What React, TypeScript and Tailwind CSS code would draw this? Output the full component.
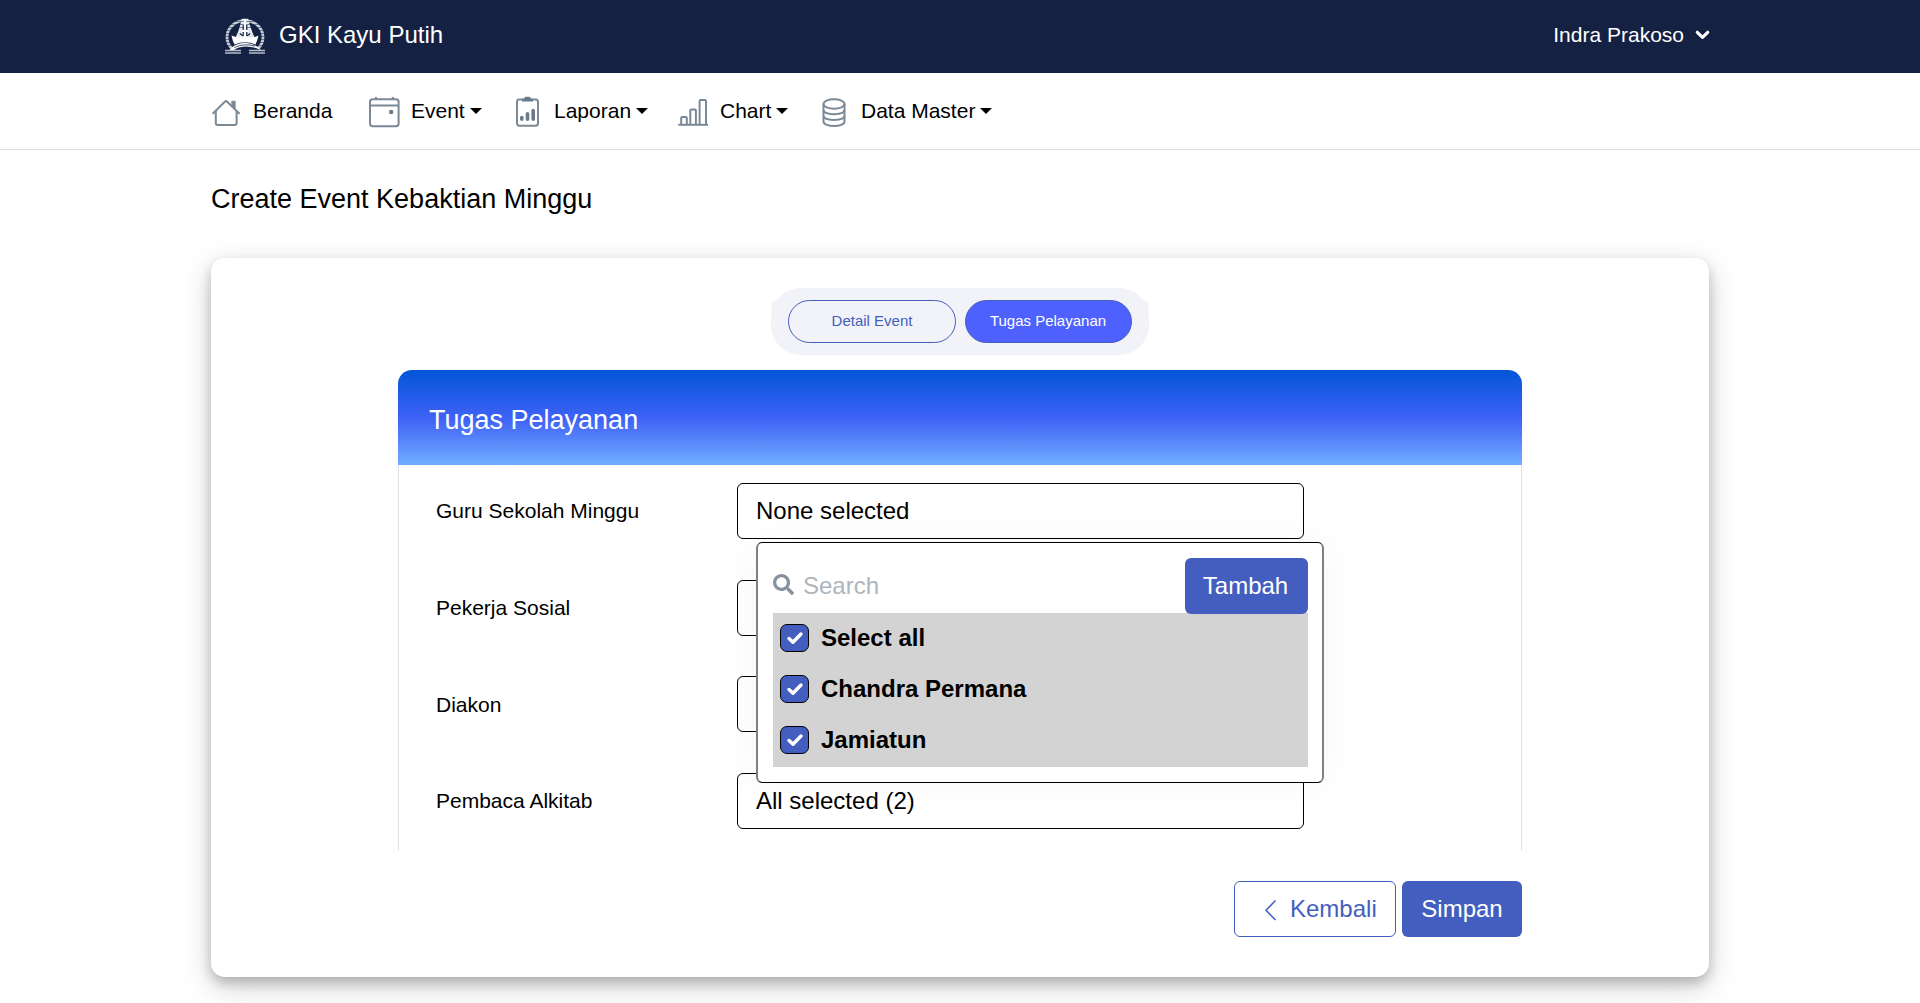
import React from "react";
import { FaSearch } from "react-icons/fa";

const Caret = () => (
  <span className="ml-[5px] mt-[-1px] h-0 w-0 border-x-[6px] border-t-[6px] border-x-transparent border-t-black" />
);

const stroke = { fill: "none", stroke: "#7b8896", strokeWidth: 2 } as const;

const HomeIcon = () => (
  <svg className="h-[30px] w-[30px] shrink-0" viewBox="0 0 30 30" {...stroke} strokeLinecap="round" strokeLinejoin="round">
    <path d="M2.2 16.3 L13.8 4.7 Q15 3.6 16.2 4.7 L28 16.3" />
    <path d="M4.8 14.5 V26 Q4.8 28 6.8 28 H23.6 Q25.6 28 25.6 26 V14.5" />
    <path d="M21 4.2 H24.2 V11.5 L21 8.5 Z" fill="#7b8896" strokeWidth="0.8" />
  </svg>
);

const CalendarIcon = () => (
  <svg className="h-[32px] w-[32px] shrink-0" viewBox="0 0 32 32" {...stroke}>
    <rect x="2" y="3.2" width="28.6" height="27" rx="2.6" />
    <path d="M2 9.6 H30.6 M8 1 V3.5 M24.8 1 V3.5" />
    <circle cx="23.2" cy="16" r="2.2" fill="#6b7a8b" stroke="none" />
  </svg>
);

const ReportIcon = () => (
  <svg className="h-[31px] w-[25px] shrink-0" viewBox="0 0 25 31" {...stroke}>
    <rect x="2" y="3.5" width="21" height="26.2" rx="2.4" />
    <path d="M7 5.5 V2.8 H9.3 Q9.3 0.8 10.8 0.8 H14.2 Q15.7 0.8 15.7 2.8 H18 V5.5 Z" fill="#6b7a8b" stroke="none" />
    <path d="M6.8 21.5 V23.3 M12.5 17.8 V23.3 M18.2 14.5 V23.3" strokeWidth="3.6" strokeLinecap="round" stroke="#6b7a8b" />
  </svg>
);

const ChartIcon = () => (
  <svg className="h-[30px] w-[32px] shrink-0" viewBox="0 0 32 30" {...stroke}>
    <path d="M1.3 27.8 H31" />
    <path d="M4.2 27 V21 Q4.2 20 5.2 20 H8.8 Q9.8 20 9.8 21 V27" />
    <path d="M13.3 27 V13.5 Q13.3 12.5 14.3 12.5 H17.9 Q18.9 12.5 18.9 13.5 V27" />
    <path d="M22.6 27 V4 Q22.6 3 23.6 3 H28 Q29 3 29 4 V27" />
  </svg>
);

const DatabaseIcon = () => (
  <svg className="h-[30px] w-[25px] shrink-0" viewBox="0 0 25 30" {...stroke}>
    <ellipse cx="12" cy="7" rx="10.5" ry="4.7" />
    <path d="M1.5 7 V24.5 C1.5 30.5 22.5 30.5 22.5 24.5 V7" />
    <path d="M1.5 13 C1.5 18.5 22.5 18.5 22.5 13 M1.5 18.8 C1.5 24.3 22.5 24.3 22.5 18.8" />
  </svg>
);

const Logo = () => (
  <svg className="h-[40px] w-[40px]" viewBox="0 0 40 40" fill="none">
    <path d="M7 33.5 A18 16.5 0 1 1 33 33.5" stroke="#c6ccd7" strokeWidth="2.8" />
    <path d="M17 3.5 H23 L24.5 9 Q27 17 30 23.500 H10 Q13.500 17 15.500 9 Z" fill="#e6e9ee" />
    <g stroke="#142143" strokeWidth="1" opacity="0.5">
      <path d="M0 3.5 H40 M0 6.5 H40 M0 9.5 H40 M0 12.5 H40 M0 15.5 H12 M28 15.5 H40 M0 18.5 H11 M29 18.5 H40 M0 21.5 H6 M34 21.5 H40 M0 24.5 H7 M33 24.5 H40 M0 27.5 H7 M33 27.5 H40 M0 30.5 H7 M33 30.5 H40" />
    </g>
    <path d="M18.2 10 V15 M21.8 10 V15 M18.2 17 V21 M21.8 17 V21" stroke="#142143" strokeWidth="1.2" />
    <path d="M14.8 18.5 L17.8 20.8 M25.2 18.5 L22.2 20.8" stroke="#142143" strokeWidth="1.2" />
    <path d="M20 4 V24 M17 16 H23" stroke="#fff" strokeWidth="2" />
    <path d="M6.5 20.5 Q12 23.5 20 22.3 Q28 23.5 33.5 20.5 Q32.5 25.5 30.5 29.5 Q20 25 9.5 29.5 Q7.5 26 6.5 20.5 Z" fill="#fff" />
    <path d="M4 35.5 Q9 28.5 20 27.8 Q31 28.5 36.5 35.5 Q29 31.2 20 31.5 Q12 32 8.5 35.5 Z" fill="#fff" />
    <path d="M9.5 32.5 Q19 27.8 30 31.2" stroke="#142143" strokeWidth="0.8" />
    <path d="M0 35.5 H16 M24 35.5 H40 M0 38 H16 M24 38 H40" stroke="#b4bbc9" strokeWidth="1.700" />
  </svg>
);

const navItems = [
  { label: "Beranda", Icon: HomeIcon, box: "w-[157px]", slot: "w-[42px] pt-px", caret: false },
  { label: "Event", Icon: CalendarIcon, box: "w-[147px]", slot: "w-[43px] pt-px", caret: true },
  { label: "Laporan", Icon: ReportIcon, box: "w-[162px]", slot: "w-[39px] pt-px", caret: true },
  { label: "Chart", Icon: ChartIcon, box: "w-[145px]", slot: "w-[43px] pt-px", caret: true },
  { label: "Data Master", Icon: DatabaseIcon, box: "w-[180px]", slot: "w-[39px] pt-px", caret: true },
];

const rows = [
  { label: "Guru Sekolah Minggu", value: "None selected" },
  { label: "Pekerja Sosial", value: "" },
  { label: "Diakon", value: "" },
  { label: "Pembaca Alkitab", value: "All selected (2)" },
];

const options = ["Select all", "Chandra Permana", "Jamiatun"];

const Dropdown = () => (
  <div className="absolute left-[18px] top-[58px] z-10 h-[241px] w-[568px] rounded-[6px] border-x-2 border-y border-x-[#808080] border-y-black bg-white pl-[15px] pr-[14px] pt-[15px] shadow-[0_0_40px_rgba(0,0,0,0.04)]">
    <div className="flex h-[55px] items-start">
      <FaSearch className="mt-[16px] h-[21px] w-[21px] text-[#8593a1]" />
      <span className="ml-[9px] mt-[10px] grow text-[24px] leading-[36px] text-[#adb5bd]">Search</span>
      <button className="relative h-[56px] w-[123px] shrink-0 rounded-[6px] bg-[#435ebe] pr-[2px] text-[24px] leading-[36px] text-white">Tambah</button>
    </div>
    <div className="flex h-[154px] flex-col bg-[#d3d3d3] pl-[7px]">
      {options.map((o) => (
        <div key={o} className="flex h-[51px] items-center">
          <span className="mt-[-1px] flex h-[28px] w-[29px] items-center justify-center rounded-[7px] border border-black bg-[#435ebe]">
            <svg className="h-[14px] w-[18px]" viewBox="0 0 18 14" fill="none" stroke="#fff" strokeWidth="3.4" strokeLinecap="round" strokeLinejoin="round">
              <path d="M3 7.5 L7 11.3 L15 3" />
            </svg>
          </span>
          <span className="ml-[12px] mt-[-2px] text-[24px] font-bold leading-[36px]">{o}</span>
        </div>
      ))}
    </div>
  </div>
);

export default function App() {
  return (
    <div className="flex h-[1003px] w-[1920px] flex-col overflow-hidden bg-white font-['Liberation_Sans',Arial,sans-serif] text-black">
      <header className="flex h-[73px] shrink-0 items-start justify-between bg-[#142143] pl-[225px] pr-[210px] text-white">
        <div className="flex items-start">
          <div className="pt-[15px]"><Logo /></div>
          <span className="ml-[14px] mt-[17px] text-[24px] leading-[36px]">GKI Kayu Putih</span>
        </div>
        <div className="mt-[19px] flex items-center text-[21px] leading-[32px]">
          Indra Prakoso
          <svg className="ml-[11px] mt-[-1px] h-[10px] w-[15px]" viewBox="0 0 15 10" fill="none" stroke="#fff" strokeWidth="3.2" strokeLinecap="round" strokeLinejoin="round">
            <path d="M2.3 2.3 L7.5 7.3 L12.7 2.3" />
          </svg>
        </div>
      </header>

      <nav className="flex h-[77px] shrink-0 items-center border-b border-[#dcdcdc] pl-[211px]">
        {navItems.map(({ label, Icon, box, slot, caret }) => (
          <div key={label} className={`flex items-center ${box}`}>
            <span className={`shrink-0 ${slot}`}><Icon /></span>
            <span className="whitespace-nowrap text-[21px] leading-[32px]">{label}</span>
            {caret && <Caret />}
          </div>
        ))}
      </nav>

      <h1 className="mt-[29px] h-[79px] shrink-0 pl-[211px] text-[27px] leading-[40px]">Create Event Kebaktian Minggu</h1>

      <main className="mx-[211px] flex h-[719px] shrink-0 flex-col items-center rounded-[14px] bg-white pt-[30px] shadow-[0_6px_12px_rgba(0,0,0,0.2),0_9px_30px_rgba(0,0,0,0.19)]">
        <div className="relative flex h-[67px] w-[378px] shrink-0 items-center justify-center gap-[9px] rounded-[30px] bg-[#f2f3f8] text-[15px]">
          <div className="absolute inset-x-0 top-[12px] h-[13px] rounded-[6px] bg-[#f2f3f8]" />
          <button className="relative h-[43px] w-[168px] rounded-full border border-[#435ebe] text-[#435ebe]">Detail Event</button>
          <button className="relative h-[43px] w-[167px] rounded-full border border-[#435ebe] bg-[#4e61ff] pr-[1px] text-white">Tugas Pelayanan</button>
        </div>

        <section className="mt-[15px] flex h-[481px] w-[1124px] shrink-0 flex-col">
          <h2 className="h-[95px] shrink-0 rounded-t-[14px] bg-[linear-gradient(180deg,#0355d8_0%,#4062f6_52%,#70affe_100%)] pl-[31px] pt-[30px] text-[27px] leading-[40px] text-white">Tugas Pelayanan</h2>
          <div className="min-h-0 grow overflow-hidden border-x border-[#dee2e6] pl-[37px] pt-[18px]">
            {rows.map((r, i) => (
              <div key={r.label} className="flex h-[96.7px] items-start">
                <span className="mt-[12.2px] w-[301px] text-[21px] leading-[32px]">{r.label}</span>
                <div className="relative h-[56px] w-[567px] rounded-[6px] border border-black bg-white pl-[18px] pt-[9px] text-[24px] leading-[36px]">
                  {r.value}
                  {i === 0 && <Dropdown />}
                </div>
              </div>
            ))}
          </div>
        </section>

        <div className="mt-[30px] flex w-[1124px] justify-end gap-[6px] text-[24px] leading-[36px]">
          <button className="flex h-[56px] w-[162px] items-center rounded-[6px] border border-[#435ebe] pl-[29px] text-[#435ebe]">
            <svg className="mt-[2px] h-[22px] w-[13px]" viewBox="0 0 13 22" fill="none" stroke="#435ebe" strokeWidth="1.5">
              <path d="M11.5 1.5 L2 11.2 L11.5 21" />
            </svg>
            <span className="ml-[13px]">Kembali</span>
          </button>
          <button className="h-[56px] w-[120px] rounded-[6px] bg-[#435ebe] text-white">Simpan</button>
        </div>
      </main>
    </div>
  );
}
